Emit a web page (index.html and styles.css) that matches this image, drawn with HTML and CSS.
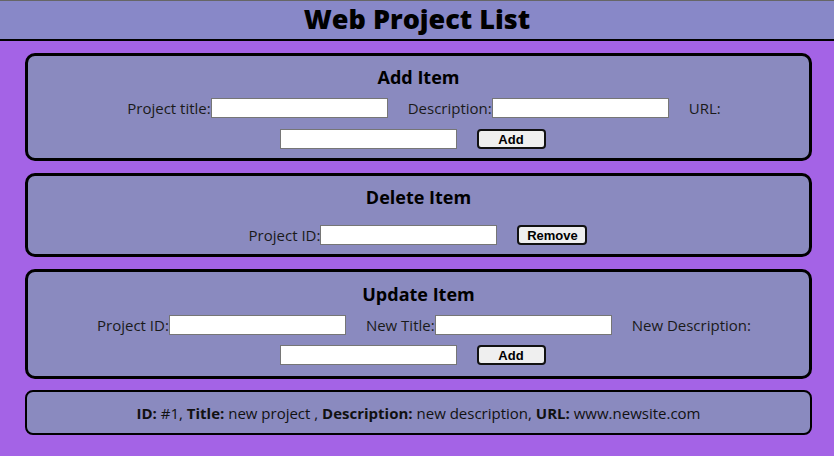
FILE: index.html
```html
<!DOCTYPE html>
<html>
<head>
<meta charset="utf-8">
<title>Web Project List</title>
<link rel="stylesheet" href="styles.css">
</head>
<body>
<header class="top">
  <h1 class="title">Web Project List</h1>
</header>
<main class="content">
  <section class="card">
    <h2 class="card-title">Add Item</h2>
    <div class="row">
      <label class="lbl">Project title:</label><input class="field" type="text">
      <label class="lbl">Description:</label><input class="field" type="text">
      <label class="lbl">URL:</label><input class="field" type="text">
      <button class="btn">Add</button>
    </div>
  </section>
  <section class="card card-del">
    <h2 class="card-title">Delete Item</h2>
    <div class="row">
      <label class="lbl">Project ID:</label><input class="field" type="text">
      <button class="btn btn-remove">Remove</button>
    </div>
  </section>
  <section class="card card-upd">
    <h2 class="card-title">Update Item</h2>
    <div class="row">
      <label class="lbl">Project ID:</label><input class="field" type="text">
      <label class="lbl">New Title:</label><input class="field" type="text">
      <label class="lbl">New Description:</label><input class="field" type="text">
      <button class="btn">Add</button>
    </div>
  </section>
  <section class="result">
    <p class="result-text"><b>ID:</b> #1, <b>Title:</b> new project , <b>Description:</b> new description, <b>URL:</b> www.newsite.com</p>
  </section>
</main>
</body>
</html>
```
FILE: styles.css
```css
* { box-sizing: border-box; }
html, body { margin: 0; padding: 0; }
body {
  background: #a463e6;
  font-family: "Open Sans", "Noto Sans", sans-serif;
  color: #111;
  height: 456px;
  overflow: hidden;
}
.top {
  background: #8888c8;
  border-top: 1px solid #666;
  border-bottom: 2px solid #000;
  height: 41px;
  display: flex;
  align-items: center;
  justify-content: center;
}
.title {
  margin: 0 0 2px;
  font-size: 27px;
  font-weight: 800;
  line-height: 36px;
  color: #000;
}
.content {
  display: flex;
  flex-direction: column;
  gap: 12px;
  padding: 12px 22px 0 25px;
}
.card {
  background: #8a8abf;
  border: 3px solid #000;
  border-radius: 10px;
  padding: 9px 0 9px;
}
.card-title {
  margin: 0 0 9px;
  text-align: center;
  font-size: 18px;
  font-weight: 700;
  line-height: 24px;
  color: #000;
}
.row {
  display: flex;
  flex-wrap: wrap;
  justify-content: center;
  align-items: center;
  row-gap: 11px;
}
.lbl {
  margin-left: 11px;
  font-size: 15px;
  line-height: 20px;
  color: #1a1a1a;
}
.field {
  width: 177px;
  height: 20px;
  margin: 0 9px 0 0;
  border: 1px solid #767676;
  background: #fff;
  padding: 0 2px;
}
.btn {
  margin: 0 12px 0 11px;
  width: 69px;
  height: 20px;
  padding: 0;
  background: #efefef;
  border: 2px solid #111;
  border-radius: 4px;
  font-family: "Liberation Sans", Arial, sans-serif;
  font-weight: 700;
  font-size: 13px;
  color: #000;
}
.card-del { padding-bottom: 9px; }
.card-del .card-title { margin-bottom: 16px; }
.btn-remove { width: 70px; }
.card-upd .row { row-gap: 10px; }
.card-upd { padding-top: 10px; padding-bottom: 11px; }
.result {
  margin-top: -1px;
  background: #8a8abf;
  border: 2px solid #000;
  border-radius: 8px;
  height: 45px;
  display: flex;
  align-items: center;
  justify-content: center;
}
.result-text {
  margin: 0;
  font-size: 15px;
  color: #111;
}
.result b { font-weight: 700; }
```
